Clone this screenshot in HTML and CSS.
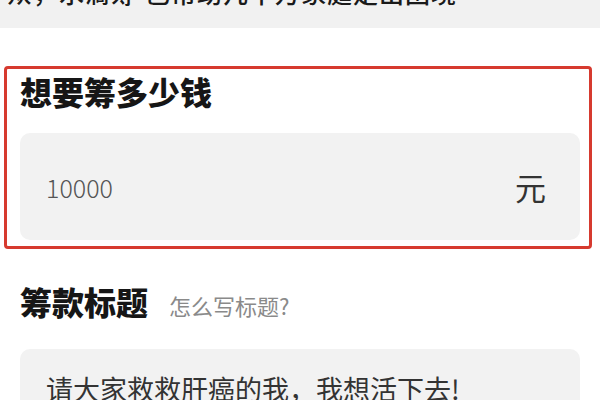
FILE: index.html
```html
<!DOCTYPE html>
<html lang="zh-CN">
<head>
<meta charset="utf-8">
<link rel="stylesheet" href="styles.css">
</head>
<body>
<div class="topbar"><div class="topbar-text">众，水滴筹<span class="sp"></span>已帮助几十万家庭走出困境</div></div>
<div class="amount-box">
  <div class="section-title">想要筹多少钱</div>
  <div class="input-box">
    <span class="amount">10000</span>
    <span class="unit">元</span>
  </div>
</div>
<div class="title-row">
  <span class="section-title">筹款标题</span>
  <span class="hint">怎么写标题?</span>
</div>
<div class="text-box">
  <div class="text-value">请大家救救肝癌的我，我想活下去!</div>
</div>
</body>
</html>
```
FILE: styles.css
```css
html, body {
  margin: 0;
  padding: 0;
  background: #ffffff;
  font-family: "Noto Sans CJK SC", "Noto Sans", sans-serif;
  width: 600px;
  height: 400px;
  overflow: hidden;
}
.topbar {
  height: 28px;
  background: #f1f1f1;
  overflow: hidden;
}
.topbar-text {
  margin-top: -20px;
  padding-left: 7px;
  font-size: 25px;
  line-height: 25px;
  letter-spacing: 1px;
  font-weight: 500;
  color: #1a1a1a;
  white-space: nowrap;
}
.sp {
  display: inline-block;
  width: 8px;
}
.amount-box {
  margin: 38px 0 0 4px;
  width: 588px;
  box-sizing: border-box;
  border: 3px solid #d63a2f;
  border-radius: 4px;
  padding: 6px 9px 6px 13px;
}
.section-title {
  font-size: 32px;
  line-height: 32px;
  font-weight: 900;
  color: #161616;
}
.input-box {
  margin-top: 26px;
  height: 107px;
  background: #f2f2f2;
  border-radius: 10px;
  display: flex;
  align-items: center;
  justify-content: space-between;
  padding: 0 34px 0 26px;
}
.amount {
  font-size: 25px;
  color: #555;
  font-weight: 300;
}
.unit {
  font-size: 31px;
  color: #333;
}
.title-row {
  margin: 36px 0 0 20px;
  display: flex;
  align-items: baseline;
  gap: 21px;
}
.hint {
  font-size: 22px;
  color: #8a8a8a;
}
.text-box {
  margin: 28px 20px 0 20px;
  height: 120px;
  background: #f2f2f2;
  border-radius: 10px;
  padding: 26px 26px 0 26px;
}
.text-value {
  font-size: 27px;
  line-height: 27px;
  color: #333;
}
```
